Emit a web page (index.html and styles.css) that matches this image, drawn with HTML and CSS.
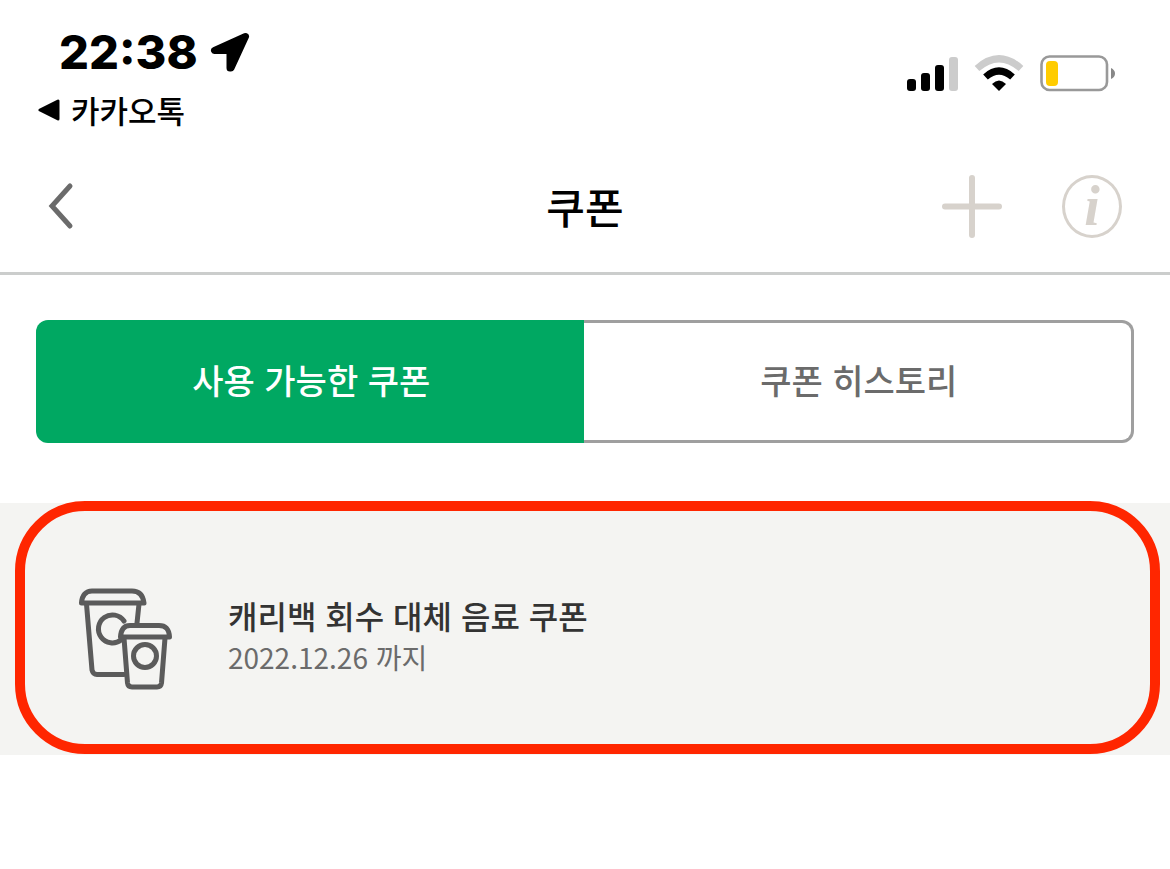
FILE: index.html
```html
<!DOCTYPE html>
<html lang="ko">

<head>
    <meta charset="UTF-8">
    <meta name="viewport" content="width=device-width, initial-scale=1.0">
    <title>쿠폰</title>
    <link rel="stylesheet" href="styles.css">
</head>

<body>
    <div class="status-bar">
        <div class="status-left">
            <div class="clock">
                <span>22:38</span>
                <svg width="40" height="40" viewBox="0 0 40 40" aria-hidden="true">
                    <path d="M35.500 4.500 L4.500 18.500 H20 V36 H21 Z" fill="#000" stroke="#000" stroke-width="7" stroke-linejoin="round"/>
                </svg>
            </div>
            <a href="#" class="back-app">
                <svg width="22" height="22" viewBox="0 0 22 22" aria-hidden="true">
                    <path d="M2 11 L20 2 V20 Z" fill="#000" stroke="#000" stroke-width="3" stroke-linejoin="round"/>
                </svg>
                <span>카카오톡</span>
            </a>
        </div>
        <div class="status-right">
            <!-- signal -->
            <svg width="52" height="36" viewBox="0 0 52 36" aria-hidden="true">
                <rect x="1" y="24" width="9" height="12" rx="3"/>
                <rect x="15" y="18" width="9" height="18" rx="3"/>
                <rect x="29" y="10" width="9" height="26" rx="3"/>
                <rect x="43" y="2" width="9" height="34" rx="3" fill="#ccc"/>
            </svg>
            <!-- wifi -->
            <svg width="50" height="36" viewBox="0 0 50 36" aria-hidden="true">
                <path d="M3 13.500 Q25 -6 47 13.500" fill="none" stroke="#ccc" stroke-width="7"/>
                <path d="M11.500 22 Q25 10 38.500 22" fill="none" stroke="#000" stroke-width="7"/>
                <path d="M25 36 L18 29 Q25 22 32 29 Z"/>
            </svg>
            <!-- battery -->
            <svg width="76" height="38" viewBox="0 0 76 38" aria-hidden="true">
                <rect x="1.500" y="2.500" width="65.500" height="33.500" rx="8" fill="none" stroke="#999" stroke-width="2.600"/>
                <rect x="6" y="7" width="12" height="25" rx="4" fill="#fc0"/>
                <path d="M71 14 Q75 16 75 19.500 Q75 23 71 25 Z" fill="#888"/>
            </svg>
        </div>
    </div>

    <header class="header">
        <button class="icon-btn back" aria-label="뒤로">
            <svg width="26" height="48" viewBox="0 0 26 48" aria-hidden="true">
                <path d="M22 4 L4 24 L22 44" fill="none" stroke="#6b6b6b" stroke-width="5" stroke-linecap="round"/>
            </svg>
        </button>
        <h1>쿠폰</h1>
        <div class="actions">
            <button class="icon-btn" aria-label="쿠폰 등록">
                <svg width="60" height="63" viewBox="0 0 60 63" aria-hidden="true">
                    <path d="M30 3 V60 M3 31.500 H57" fill="none" stroke="#d7d2cc" stroke-width="6" stroke-linecap="round"/>
                </svg>
            </button>
            <button class="icon-btn info" aria-label="안내">i</button>
        </div>
    </header>

    <main>
        <div class="tabs">
            <button class="tab active">사용 가능한 쿠폰</button>
            <button class="tab">쿠폰 히스토리</button>
        </div>

        <div class="coupon">
            <svg class="cups" width="96" height="104" viewBox="0 0 96 104" fill="none" stroke="#5b5b5b" stroke-width="5" stroke-linejoin="round" stroke-linecap="round" aria-hidden="true">
                <path d="M3.500 16 C4 8 8 4 14 4 H54 C61 4 65 8 66 16 Z"/>
                <path d="M8.500 17 L14 83 Q15 87.500 19 87.500 H46 M61 17 L59 36"/>
                <path d="M46 34 A14 14 0 1 0 43 53"/>
                <path d="M42.500 50 C43 42 46 38.500 52 38.500 H81 C88 38.500 91 42 91.500 50 Z"/>
                <path d="M46 51 L49.500 96 Q50 100 54 100 H79 Q83 100 83.500 96 L87 51"/>
                <circle cx="67" cy="69" r="11.500"/>
            </svg>
            <div class="coupon-text">
                <h2>캐리백 회수 대체 음료 쿠폰</h2>
                <p>2022.12.26 까지</p>
            </div>
        </div>
    </main>
</body>

</html>
```
FILE: styles.css
```css
* {
    margin: 0;
    padding: 0;
    box-sizing: border-box;
}

body {
    background-color: #fff;
    color: #000;
    font-family: "Noto Sans CJK KR", sans-serif;
}

button {
    border: none;
    background: none;
    font-family: inherit;
    cursor: pointer;
}

svg {
    display: block;
}

.status-bar {
    display: flex;
    justify-content: space-between;
    align-items: flex-start;
    height: 140px;
    padding: 28px 54px 0 38px;
}

.clock {
    display: flex;
    align-items: center;
    gap: 12px;
    padding-left: 21px;
    font-family: Inter, sans-serif;
    font-size: 47px;
    font-weight: 800;
    line-height: 48px;
}

.back-app {
    display: flex;
    align-items: center;
    gap: 11px;
    margin-top: 14px;
    color: #000;
    font-size: 31px;
    font-weight: 500;
    line-height: 40px;
    text-decoration: none;
}

.status-right {
    display: flex;
    align-items: center;
    gap: 16px;
    padding-top: 26px;
}

.header {
    display: grid;
    grid-template-columns: 1fr auto 1fr;
    align-items: center;
    height: 135px;
    padding: 0 48px;
    border-bottom: 3px solid #cbcdcc;
}

.header h1 {
    font-size: 42px;
    font-weight: 500;
    line-height: 60px;
}

.back {
    justify-self: start;
}

.actions {
    display: flex;
    justify-content: flex-end;
    gap: 60px;
}

.info {
    width: 60px;
    height: 63px;
    border: 3px solid #d7d2cc;
    border-radius: 50%;
    color: #d7d2cc;
    font-family: "Liberation Serif", serif;
    font-size: 56px;
    font-style: italic;
    font-weight: bold;
    line-height: 52px;
}

.tabs {
    display: flex;
    margin: 45px 36px 60px;
}

.tab {
    flex: 1;
    height: 123px;
    padding: 0 0 4px 3px;
    border: 3px solid #9f9f9f;
    border-left: none;
    border-radius: 0 12px 12px 0;
    color: #6b6b6b;
    font-size: 34px;
    font-weight: 500;
}

.tab.active {
    border: none;
    border-radius: 12px 0 0 12px;
    background-color: #00a862;
    color: #fff;
}

.coupon {
    position: relative;
    display: flex;
    align-items: center;
    gap: 54px;
    min-height: 252px;
    padding: 20px 78px;
    background-color: #f4f4f2;
}

/* red highlight around the coupon */
.coupon::after {
    content: "";
    position: absolute;
    inset: -2px 10px 1px 15px;
    border: 10px solid #ff2600;
    border-radius: 70px;
    pointer-events: none;
}

.cups {
    margin-top: 20px;
}

.coupon-text {
    padding-top: 12px;
}

.coupon-text h2 {
    color: #333;
    font-size: 32px;
    font-weight: 500;
    line-height: 44px;
}

.coupon-text p {
    color: #6b6b6b;
    font-size: 28px;
    font-weight: 400;
    line-height: 40px;
}
```
